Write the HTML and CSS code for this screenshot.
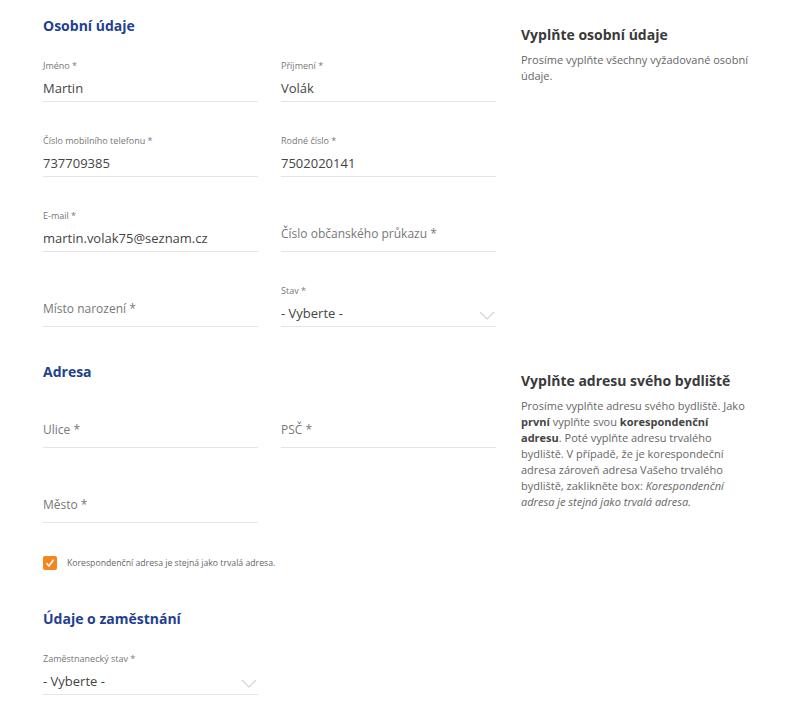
FILE: index.html
```
<!DOCTYPE html>
<html>

<head>
    <meta charset="utf-8">
    <title>Osobní údaje</title>
    <link rel="stylesheet" href="styles.css">
</head>

<body>
    <div class="section">
        <div class="form">
            <h2>Osobní údaje</h2>
            <div class="grid">
                <div class="field">
                    <div class="label">Jméno *</div>
                    <div class="value">Martin</div>
                </div>
                <div class="field">
                    <div class="label">Příjmení *</div>
                    <div class="value">Volák</div>
                </div>
                <div class="field">
                    <div class="label">Číslo mobilního telefonu *</div>
                    <div class="value">737709385</div>
                </div>
                <div class="field">
                    <div class="label">Rodné číslo *</div>
                    <div class="value">7502020141</div>
                </div>
                <div class="field">
                    <div class="label">E-mail *</div>
                    <div class="value">martin.volak75@seznam.cz</div>
                </div>
                <div class="field empty">
                    <div class="value">Číslo občanského průkazu *</div>
                </div>
                <div class="field empty">
                    <div class="value">Místo narození *</div>
                </div>
                <div class="field select">
                    <div class="label">Stav *</div>
                    <div class="value">- Vyberte -</div>
                    <svg class="chevron" width="16" height="9" viewBox="0 0 16 9"><path d="M1 1 L8 8 L15 1" fill="none" stroke="#d4d4d4" stroke-width="1.2"/></svg>
                </div>
            </div>
        </div>
        <div class="aside">
            <h3>Vyplňte osobní údaje</h3>
            <p>Prosíme vyplňte všechny vyžadované osobní údaje.</p>
        </div>
    </div>

    <div class="section second">
        <div class="form">
            <h2>Adresa</h2>
            <div class="grid">
                <div class="field empty">
                    <div class="value">Ulice *</div>
                </div>
                <div class="field empty">
                    <div class="value">PSČ *</div>
                </div>
                <div class="field empty">
                    <div class="value">Město *</div>
                </div>
            </div>
            <label class="check">
                <span class="box"><svg width="10" height="10" viewBox="0 0 10 10"><path d="M1.5 5.2 L4 8 L8.6 1.6" fill="none" stroke="#fff" stroke-width="1.6"/></svg></span>
                Korespondenční adresa je stejná jako trvalá adresa.
            </label>
        </div>
        <div class="aside">
            <h3>Vyplňte adresu svého bydliště</h3>
            <p class="narrow">Prosíme vyplňte adresu svého bydliště. Jako <b>první</b> vyplňte svou <b>korespondenční adresu</b>. Poté vyplňte adresu trvalého bydliště. V případě, že je korespondeční adresa zároveň adresa Vašeho trvalého bydliště, zaklikněte box: <i>Korespondenční adresa je stejná jako trvalá adresa.</i></p>
        </div>
    </div>

    <div class="section third">
        <div class="form">
            <h2>Údaje o zaměstnání</h2>
            <div class="grid">
                <div class="field select">
                    <div class="label">Zaměstnanecký stav *</div>
                    <div class="value">- Vyberte -</div>
                    <svg class="chevron" width="16" height="9" viewBox="0 0 16 9"><path d="M1 1 L8 8 L15 1" fill="none" stroke="#d4d4d4" stroke-width="1.2"/></svg>
                </div>
            </div>
        </div>
    </div>
</body>

</html>
```

FILE: styles.css
```
html,
body {
    margin: 0;
    padding: 0;
    background: #fff;
}

* {
    box-sizing: border-box;
}

body {
    padding: 16px 0 0 43px;
    font-family: "Open Sans", "Liberation Sans", sans-serif;
    color: #444;
}

.section {
    display: flex;
}

.section.second {
    margin-top: 35px;
}

.section.third {
    margin-top: 39px;
}

.form {
    width: 453px;
}

h2 {
    margin: 0 0 24px;
    font-size: 14px;
    line-height: 20px;
    font-weight: 700;
    color: #233f91;
}

.grid {
    display: grid;
    grid-template-columns: 215px 215px;
    column-gap: 23px;
    row-gap: 33px;
}

.field {
    position: relative;
    border-bottom: 1px solid #e4e4e4;
    padding-bottom: 3px;
}

.field .label {
    font-size: 9px;
    line-height: 12px;
    margin-bottom: 6px;
    color: #777;
}

.field .value {
    font-size: 13px;
    line-height: 20px;
    color: #444;
}

.field.empty {
    padding-top: 14px;
    padding-bottom: 7px;
}

.field.empty .value {
    font-size: 12px;
    color: #777;
}

.chevron {
    position: absolute;
    right: 1px;
    bottom: 6px;
}

.check {
    display: flex;
    align-items: center;
    margin-top: 33px;
    font-size: 8.7px;
    line-height: 14px;
    color: #666;
}

.check .box {
    display: flex;
    align-items: center;
    justify-content: center;
    width: 14px;
    height: 14px;
    margin-right: 10px;
    border-radius: 2px;
    background: #f5861f;
}

.aside {
    width: 250px;
    margin-left: 25px;
    padding-top: 9px;
}

h3 {
    margin: 0 0 7px;
    font-size: 14px;
    line-height: 20px;
    font-weight: 700;
    color: #3a3a3a;
}

.aside p {
    margin: 0;
    font-size: 11px;
    line-height: 16px;
    color: #666;
}

.aside p.narrow {
    width: 228px;
}

.aside b {
    color: #444;
}
```
